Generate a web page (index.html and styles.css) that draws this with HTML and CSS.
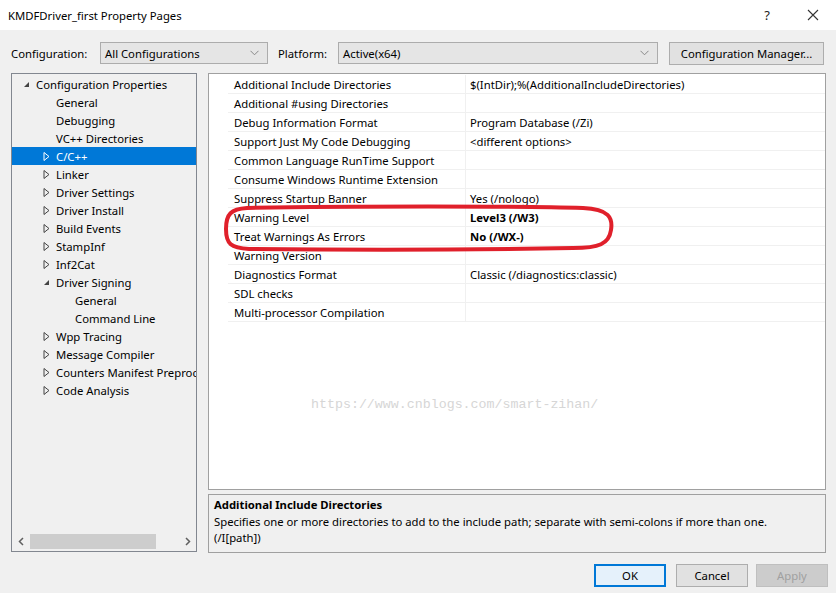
FILE: index.html
```html
<!DOCTYPE html>
<html>
<head>
<meta charset="utf-8">
<link rel="stylesheet" href="styles.css">
</head>
<body>
<div class="window">
  <div class="titlebar">
    <span class="title">KMDFDriver_first Property Pages</span>
    <span class="tb-help">?</span>
    <span class="tb-close"><svg width="12" height="12" viewBox="0 0 12 12"><path d="M1 1L11 11M11 1L1 11" stroke="#333" stroke-width="1.1"/></svg></span>
  </div>
  <div class="toolbar">
    <span class="lbl lbl-conf">Configuration:</span>
    <div class="combo combo-config"><span>All Configurations</span><svg class="chev" width="9" height="6" viewBox="0 0 9 6"><path d="M0.5 0.8L4.5 4.8L8.5 0.8" fill="none" stroke="#888" stroke-width="1"/></svg></div>
    <span class="lbl lbl-plat">Platform:</span>
    <div class="combo combo-plat"><span>Active(x64)</span><svg class="chev" width="9" height="6" viewBox="0 0 9 6"><path d="M0.5 0.8L4.5 4.8L8.5 0.8" fill="none" stroke="#888" stroke-width="1"/></svg></div>
    <div class="btn btn-cm">Configuration Manager...</div>
  </div>
  <div class="main">
    <div class="tree">
      <div class="tree-items">
        <div class="ti l0"><span class="arr"><svg width="7" height="7" viewBox="0 0 7 7"><path d="M6 1V6H1Z" fill="#444"/></svg></span>Configuration Properties</div>
        <div class="ti l1"><span class="arr"></span>General</div>
        <div class="ti l1"><span class="arr"></span>Debugging</div>
        <div class="ti l1"><span class="arr"></span>VC++ Directories</div>
        <div class="ti l1 sel"><span class="arr"><svg width="7" height="9" viewBox="0 0 7 9"><path d="M1 0.5L6 4.5L1 8.5Z" fill="none" stroke="#fff" stroke-width="1"/></svg></span>C/C++</div>
        <div class="ti l1"><span class="arr"><svg width="7" height="9" viewBox="0 0 7 9"><path d="M1 0.5L6 4.5L1 8.5Z" fill="none" stroke="#444" stroke-width="1"/></svg></span>Linker</div>
        <div class="ti l1"><span class="arr"><svg width="7" height="9" viewBox="0 0 7 9"><path d="M1 0.5L6 4.5L1 8.5Z" fill="none" stroke="#444" stroke-width="1"/></svg></span>Driver Settings</div>
        <div class="ti l1"><span class="arr"><svg width="7" height="9" viewBox="0 0 7 9"><path d="M1 0.5L6 4.5L1 8.5Z" fill="none" stroke="#444" stroke-width="1"/></svg></span>Driver Install</div>
        <div class="ti l1"><span class="arr"><svg width="7" height="9" viewBox="0 0 7 9"><path d="M1 0.5L6 4.5L1 8.5Z" fill="none" stroke="#444" stroke-width="1"/></svg></span>Build Events</div>
        <div class="ti l1"><span class="arr"><svg width="7" height="9" viewBox="0 0 7 9"><path d="M1 0.5L6 4.5L1 8.5Z" fill="none" stroke="#444" stroke-width="1"/></svg></span>StampInf</div>
        <div class="ti l1"><span class="arr"><svg width="7" height="9" viewBox="0 0 7 9"><path d="M1 0.5L6 4.5L1 8.5Z" fill="none" stroke="#444" stroke-width="1"/></svg></span>Inf2Cat</div>
        <div class="ti l1"><span class="arr"><svg width="7" height="7" viewBox="0 0 7 7"><path d="M6 1V6H1Z" fill="#444"/></svg></span>Driver Signing</div>
        <div class="ti l2"><span class="arr"></span>General</div>
        <div class="ti l2"><span class="arr"></span>Command Line</div>
        <div class="ti l1"><span class="arr"><svg width="7" height="9" viewBox="0 0 7 9"><path d="M1 0.5L6 4.5L1 8.5Z" fill="none" stroke="#444" stroke-width="1"/></svg></span>Wpp Tracing</div>
        <div class="ti l1"><span class="arr"><svg width="7" height="9" viewBox="0 0 7 9"><path d="M1 0.5L6 4.5L1 8.5Z" fill="none" stroke="#444" stroke-width="1"/></svg></span>Message Compiler</div>
        <div class="ti l1"><span class="arr"><svg width="7" height="9" viewBox="0 0 7 9"><path d="M1 0.5L6 4.5L1 8.5Z" fill="none" stroke="#444" stroke-width="1"/></svg></span>Counters Manifest Preprocessor</div>
        <div class="ti l1"><span class="arr"><svg width="7" height="9" viewBox="0 0 7 9"><path d="M1 0.5L6 4.5L1 8.5Z" fill="none" stroke="#444" stroke-width="1"/></svg></span>Code Analysis</div>
      </div>
      <div class="hscroll">
        <span class="sarr"><svg width="6" height="9" viewBox="0 0 6 9"><path d="M5 1L1.5 4.5L5 8" fill="none" stroke="#606060" stroke-width="1.5"/></svg></span>
        <div class="strack"><div class="sthumb"></div></div>
        <span class="sarr"><svg width="6" height="9" viewBox="0 0 6 9"><path d="M1 1L4.5 4.5L1 8" fill="none" stroke="#606060" stroke-width="1.5"/></svg></span>
      </div>
    </div>
    <div class="right">
      <div class="grid">
        <div class="rows">
          <div class="row"><span class="gut"></span><span class="name">Additional Include Directories</span><span class="val">$(IntDir);%(AdditionalIncludeDirectories)</span></div>
          <div class="row"><span class="gut"></span><span class="name">Additional #using Directories</span><span class="val"></span></div>
          <div class="row"><span class="gut"></span><span class="name">Debug Information Format</span><span class="val">Program Database (/Zi)</span></div>
          <div class="row"><span class="gut"></span><span class="name">Support Just My Code Debugging</span><span class="val">&lt;different options&gt;</span></div>
          <div class="row"><span class="gut"></span><span class="name">Common Language RunTime Support</span><span class="val"></span></div>
          <div class="row"><span class="gut"></span><span class="name">Consume Windows Runtime Extension</span><span class="val"></span></div>
          <div class="row"><span class="gut"></span><span class="name">Suppress Startup Banner</span><span class="val">Yes (/nologo)</span></div>
          <div class="row"><span class="gut"></span><span class="name">Warning Level</span><span class="val b">Level3 (/W3)</span></div>
          <div class="row"><span class="gut"></span><span class="name">Treat Warnings As Errors</span><span class="val b">No (/WX-)</span></div>
          <div class="row"><span class="gut"></span><span class="name">Warning Version</span><span class="val"></span></div>
          <div class="row"><span class="gut"></span><span class="name">Diagnostics Format</span><span class="val">Classic (/diagnostics:classic)</span></div>
          <div class="row"><span class="gut"></span><span class="name">SDL checks</span><span class="val"></span></div>
          <div class="row"><span class="gut"></span><span class="name">Multi-processor Compilation</span><span class="val"></span></div>
        </div>
        <svg class="mark" width="392" height="50" viewBox="0 0 392 50"><path d="M24 4 C120 2 300 2 360 4 C386 5 390 14 388 26 C386 40 376 44 350 44 C250 46 110 46 26 45 C8 44 3 40 3 25 C3 10 8 5 24 4 Z" fill="none" stroke="#e0202b" stroke-width="4"/></svg>
        <div class="watermark">https://www.cnblogs.com/smart-zihan/</div>
      </div>
      <div class="desc">
        <div class="desc-title">Additional Include Directories</div>
        <div class="desc-text">Specifies one or more directories to add to the include path; separate with semi-colons if more than one.<br>(/I[path])</div>
      </div>
    </div>
  </div>
  <div class="footer">
    <div class="btn fbtn ok">OK</div>
    <div class="btn fbtn cancel">Cancel</div>
    <div class="btn fbtn dis">Apply</div>
  </div>
</div>
</body>
</html>
```
FILE: styles.css
```css
* { box-sizing: border-box; }
html, body { margin: 0; padding: 0; }
body {
  width: 836px;
  height: 593px;
  overflow: hidden;
  background: #f0f0f0;
  font-family: "Noto Sans", "Open Sans", sans-serif;
  font-size: 11.3px;
  color: #000;
}
.window { width: 836px; height: 593px; display: flex; flex-direction: column; }
.titlebar {
  height: 30px;
  background: #fff;
  display: flex;
  align-items: center;
  padding-left: 8px;
}
.title { flex: 1; }
.tb-help { width: 46px; text-align: center; font-size: 13px; color: #222; }
.tb-close { width: 46px; display: flex; justify-content: center; align-items: center; }

.toolbar {
  display: flex;
  align-items: center;
  height: 26px;
  margin-top: 10px;
  padding-left: 11px;
}
.lbl { flex: none; white-space: nowrap; }
.lbl-conf { width: 89px; }
.lbl-plat { width: 60px; margin-left: 10px; }
.combo {
  flex: none;
  height: 22px;
  background: #e5e5e5;
  border: 1px solid #acacac;
  display: flex;
  align-items: center;
  justify-content: space-between;
  padding: 0 8px 0 4px;
}
.combo-config { width: 168px; }
.combo-plat { width: 320px; }
.btn {
  background: #e1e1e1;
  border: 1px solid #adadad;
  display: flex;
  align-items: center;
  justify-content: center;
  flex: none;
}
.btn-cm { width: 155px; height: 23px; margin-left: 11px; }

.main {
  display: flex;
  margin-top: 7px;
  padding-left: 11px;
  gap: 11px;
}
.tree {
  width: 186px;
  height: 479px;
  border: 1px solid #828790;
  background: #f0f0f0;
  display: flex;
  flex-direction: column;
  overflow: hidden;
}
.tree-items { flex: 1; padding-top: 1px; }
.ti {
  height: 18px;
  display: flex;
  align-items: center;
  white-space: nowrap;
  overflow: hidden;
}
.ti .arr { width: 20px; display: flex; align-items: center; justify-content: center; flex: none; }
.l0 { padding-left: 4px; }
.l1 { padding-left: 24px; }
.l2 { padding-left: 43px; }
.sel { background: #0078d7; color: #fff; }
.hscroll {
  height: 17px;
  display: flex;
  align-items: center;
  margin-bottom: 1px;
}
.sarr { width: 17px; display: flex; align-items: center; justify-content: center; }
.strack { flex: 1; height: 15px; display: flex; align-items: center; }
.sthumb { width: 126px; height: 15px; background: #cdcdcd; margin-left: 1px; }

.right { display: flex; flex-direction: column; gap: 4px; }
.grid {
  position: relative;
  width: 618px;
  height: 417px;
  background: #fff;
  border: 1px solid #a0a0a0;
}
.rows { padding-top: 1px; }
.row {
  height: 19px;
  display: flex;
  align-items: center;
  white-space: nowrap;
}
.gut { width: 19px; height: 19px; flex: none; }
.name {
  width: 238px;
  height: 19px;
  line-height: 19px;
  padding-left: 6px;
  border-bottom: 1px solid #f0f0f0;
  border-right: 1px solid #f0f0f0;
  flex: none;
}
.val {
  flex: 1;
  height: 19px;
  line-height: 19px;
  padding-left: 4px;
  border-bottom: 1px solid #f0f0f0;
}
.b { font-weight: bold; }
.mark { position: absolute; left: 14px; top: 130px; }
.watermark {
  position: absolute;
  left: 102px;
  top: 323px;
  font-family: "Liberation Mono", monospace;
  font-size: 13.3px;
  color: #d6d6d6;
}
.desc {
  width: 618px;
  height: 59px;
  border: 1px solid #a0a0a0;
  background: #f0f0f0;
  padding: 2px 5px;
  line-height: 16px;
}
.desc-title { font-weight: bold; margin-bottom: 1px; }

.footer {
  display: flex;
  justify-content: flex-end;
  padding-right: 8px;
  margin-top: 11px;
}
.fbtn { width: 72px; height: 23px; }
.cancel { margin-left: 10px; }
.dis { margin-left: 8px; background: #cccccc; border-color: #bfbfbf; color: #a0a0a0; }
.ok { border: 1px solid #0078d7; background: #e5f1fb; box-shadow: inset 0 0 0 1px #0078d7; }
```
